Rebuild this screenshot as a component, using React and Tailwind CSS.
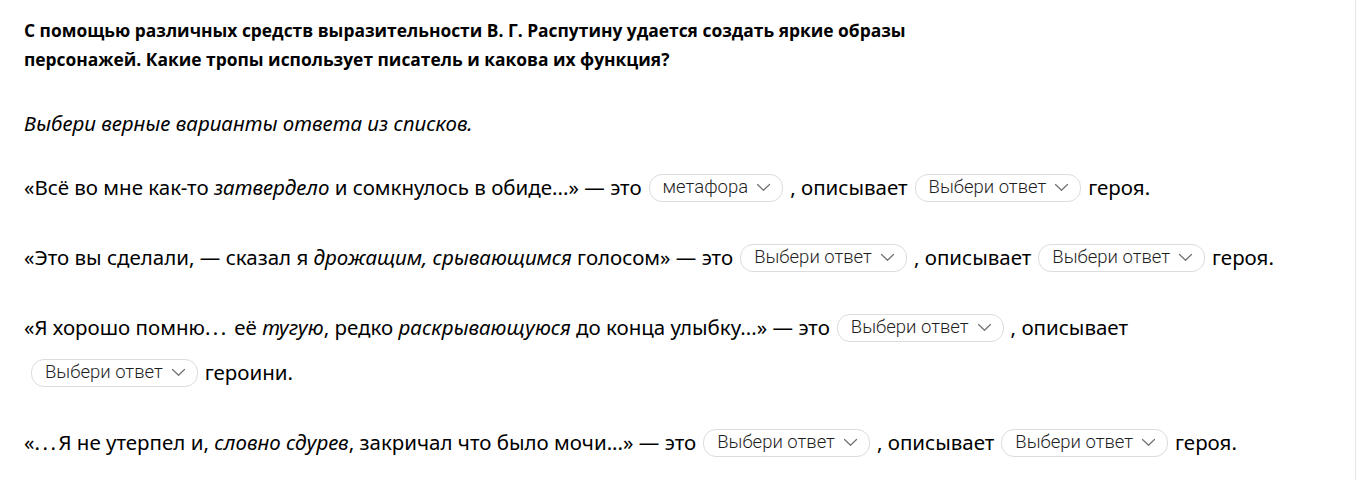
import React from "react";

function Chevron() {
  return (
    <svg width="15" height="9" viewBox="0 0 15 9" fill="none" className="shrink-0">
      <path d="M1.5 1.5 L7.5 7.3 L13.5 1.5" stroke="#707070" strokeWidth="1.2" strokeLinecap="round" strokeLinejoin="round" />
    </svg>
  );
}

function Pick({ value }) {
  return (
    <span className="inline-flex items-center align-middle h-[28px] mx-[7px] -mt-[4px] rounded-[13px] border border-[#dcdcdc] bg-white pl-[13px] pr-[11px] text-[18.5px] font-light text-[#1f1f1f] font-['Roboto',sans-serif] leading-none">
      <span className="mr-[8px]">{value}</span>
      <Chevron />
    </span>
  );
}

// Spaced-out ellipsis
function Dots() {
  return <span className="tracking-[2.5px]">...</span>;
}

const empty = "Выбери ответ";

export default function App() {
  return (
    <div className="min-h-[480px] w-[1356px] bg-white border-r border-[#e6e6e6] text-black">
      <div className="pl-[24px] pt-[16px]">
        <h2 className="w-[900px] text-[17.4px] leading-[29px] font-bold font-['Open_Sans',sans-serif] text-black">
          С помощью различных средств выразительности В. Г. Распутину удается создать яркие образы персонажей. Какие тропы использует писатель и какова их функция?
        </h2>

        <div className="mt-[34px] font-['Noto_Sans',sans-serif] text-[20.5px] text-black">
          <p className="italic leading-[30px]">Выбери верные варианты ответа из списков.</p>

          <div className="mt-[27px] flex flex-col gap-[25px] w-[1262px] leading-[45px]">
            <p>
              «Всё во мне как-то <i>затвердело</i> и сомкнулось в обиде...» — это
              <Pick value="метафора" />
              , описывает
              <Pick value={empty} />
              героя.
            </p>
            <p>
              «Это вы сделали, — сказал я <i>дрожащим, срывающимся</i> голосом» — это
              <Pick value={empty} />
              , описывает
              <Pick value={empty} />
              героя.
            </p>
            <p>
              «Я хорошо помню<Dots /> её <i>тугую</i>, редко <i>раскрывающуюся</i> до конца улыбку...» — это
              <Pick value={empty} />
              , описывает
              <Pick value={empty} />
              героини.
            </p>
            <p>
              «<Dots />Я не утерпел и, <i>словно сдурев</i>, закричал что было мочи...» — это
              <Pick value={empty} />
              , описывает
              <Pick value={empty} />
              героя.
            </p>
          </div>
        </div>
      </div>
    </div>
  );
}
